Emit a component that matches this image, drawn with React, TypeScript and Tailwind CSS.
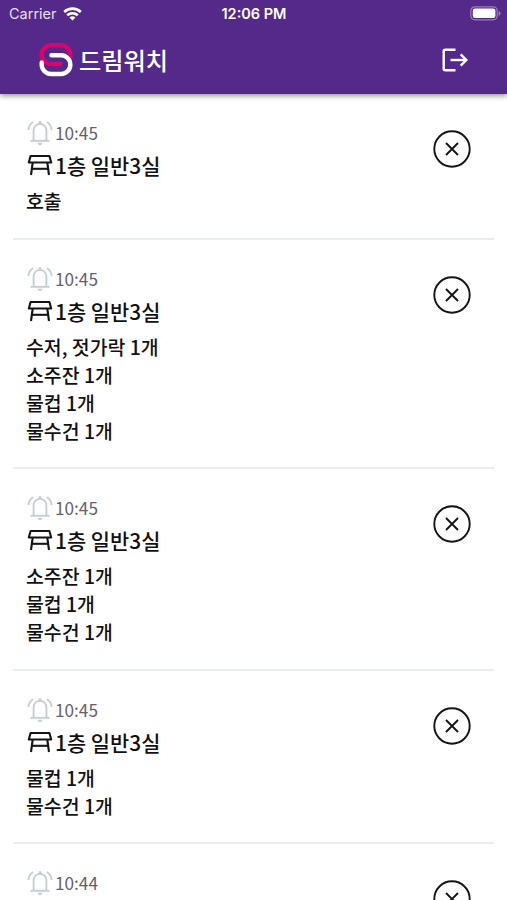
import clsx from "clsx"

type Call = {
    id: number
    time: string
    table: string
    items: string[]
}

const calls: Call[] = [
    { id: 1, time: "10:45", table: "1층 일반3실", items: ["호출"] },
    { id: 2, time: "10:45", table: "1층 일반3실", items: ["수저, 젓가락 1개", "소주잔 1개", "물컵 1개", "물수건 1개"] },
    { id: 3, time: "10:45", table: "1층 일반3실", items: ["소주잔 1개", "물컵 1개", "물수건 1개"] },
    { id: 4, time: "10:45", table: "1층 일반3실", items: ["물컵 1개", "물수건 1개"] },
    { id: 5, time: "10:44", table: "", items: [] },
]

function WifiIcon() {
    return (
        <svg className="h-[14px] w-[19px]" viewBox="0 0 19 14" fill="none" stroke="white" strokeWidth="2.6">
            <path d="M1.2 5a12 12 0 0 1 16.6 0" />
            <path d="M4.2 8.3a7.7 7.7 0 0 1 10.6 0" />
            <path d="M9.5 13.6 6.5 10.6a4.4 4.4 0 0 1 6 0z" fill="white" stroke="none" />
        </svg>
    )
}

function BatteryIcon() {
    return (
        <svg className="h-[15px] w-[31px]" viewBox="0 0 31 15" fill="none">
            <rect x="0.8" y="0.8" width="26.4" height="13" rx="4" stroke="white" strokeOpacity="0.4" strokeWidth="1.2" />
            <rect x="2.8" y="2.6" width="22.6" height="9.4" rx="2.2" fill="white" />
            <path d="M28.6 5v4.8c1.2-.4 1.9-1.4 1.9-2.4s-.7-2-1.9-2.4z" fill="white" fillOpacity="0.4" />
        </svg>
    )
}

function Logo() {
    return (
        <svg className="h-[34px] w-[34px]" viewBox="0 0 34 34" fill="none" strokeWidth="4.4">
            <path d="M31.3 15V11.5A9.200 9.200 0 0 0 22.100 2.300H12A9.300 9.300 0 0 0 12 21H23" stroke="#d9046c" />
            <path d="M12.500 12.300H22A9.300 9.300 0 0 1 22 31H12A9.400 9.400 0 0 1 2.700 21V19.500" stroke="white" strokeLinecap="round" />
        </svg>
    )
}

function LogoutIcon() {
    return (
        <svg className="h-6 w-[26px]" viewBox="0 0 26 24" fill="none" stroke="white" strokeWidth="2.4">
            <path d="M13.5 1.7H3.200Q1.700 1.700 1.700 3.200V20.800Q1.700 22.300 3.200 22.300H13.500" />
            <path d="M8.500 12H24.500" />
            <path d="M18.700 6.300 24.400 12 18.700 17.700" />
        </svg>
    )
}

function BellIcon() {
    return (
        <svg className="h-[26px] w-[26px]" viewBox="0 0 26 26" fill="none" stroke="#c5ced2" strokeWidth="1.9">
            <path d="M6.600 20.300V10.700C6.600 6.700 9.300 4 13 4S19.400 6.700 19.400 10.700V20.300" />
            <path d="M3.500 20.800H22.500" />
            <path d="M13 1.300V4" strokeWidth="2.8" />
            <path d="M10.500 22.800H15.500Q15 25.200 13 25.200T10.500 22.800Z" fill="#c5ced2" stroke="none" />
            <path d="M6 2C3.300 3.800 1.700 6.500 1.400 10" />
            <path d="M20 2C22.700 3.800 24.300 6.500 24.600 10" />
        </svg>
    )
}

function TableIcon() {
    return (
        <svg className="h-[22px] w-[26px]" viewBox="0 0 26 22" fill="none" stroke="#151515" strokeWidth="2.1" strokeLinejoin="round">
            <path d="M3.600 2H22.400L24.200 8.500H1.800Z" />
            <path d="M5.700 8.500 4 21" />
            <path d="M20.300 8.500 22 21" />
            <path d="M5 14.800H21" />
        </svg>
    )
}

function CloseIcon() {
    return (
        <svg className="h-[38px] w-[38px]" viewBox="0 0 38 38" fill="none" stroke="#151515" strokeWidth="1.9">
            <circle cx="19" cy="19" r="17.7" />
            <path d="M13 13 25 25M25 13 13 25" />
        </svg>
    )
}

function Header() {
    return (
        <header className="relative h-[94px] shrink-0 bg-[#542989] text-white shadow-[0_2px_5px_rgba(0,0,0,0.4)]">
            <div className="grid h-[27px] grid-cols-3 items-center pl-[9px] pr-[8px] font-['Inter','Liberation_Sans',sans-serif]">
                <div className="flex items-center gap-[6px]">
                    <span className="text-[14.5px] text-[#e8dff2]">Carrier</span>
                    <WifiIcon />
                </div>
                <span className="text-center text-[14.5px] font-semibold">12:06 PM</span>
                <div className="-mr-[2px] flex justify-end">
                    <BatteryIcon />
                </div>
            </div>
            <div className="flex h-[66px] items-center justify-between px-[39px]">
                <div className="flex items-center gap-[6px]">
                    <Logo />
                    <h1 className="text-[24.2px] font-medium leading-[34px]">드림워치</h1>
                </div>
                <button type="button" aria-label="로그아웃">
                    <LogoutIcon />
                </button>
            </div>
        </header>
    )
}

function CallItem({ call, last }: { call: Call; last: boolean }) {
    return (
        <li className={clsx("flex justify-between pb-[22px] pl-[13px] pr-[23px] pt-[25px]", !last && "border-b-2 border-[#ebeced]")}>
            <div>
                <div className="flex h-[28px] items-center gap-[2px] pl-px">
                    <BellIcon />
                    <span className="text-[17.2px] text-[#65616b]">{call.time}</span>
                </div>
                {call.table && (
                    <div className="flex h-9 items-center gap-[2px] pl-px">
                        <TableIcon />
                        <span className="text-[20.9px] font-medium leading-9">{call.table}</span>
                    </div>
                )}
                <ul className="pt-1">
                    {call.items.map((item) => (
                        <li key={item} className="h-[28.15px] text-[19.4px] font-medium leading-[28.15px]">{item}</li>
                    ))}
                </ul>
            </div>
            <button type="button" aria-label="닫기" className="mt-[11px] h-[38px]">
                <CloseIcon />
            </button>
        </li>
    )
}

function App() {
    return (
        <div className="flex h-screen flex-col overflow-hidden bg-white font-['Noto_Sans_CJK_KR',sans-serif] text-[#111111]">
            <Header />
            <ul className="px-[13px] pt-[0.4px]">
                {calls.map((call, i) => (
                    <CallItem key={call.id} call={call} last={i === calls.length - 1} />
                ))}
            </ul>
        </div>
    )
}

export default App
